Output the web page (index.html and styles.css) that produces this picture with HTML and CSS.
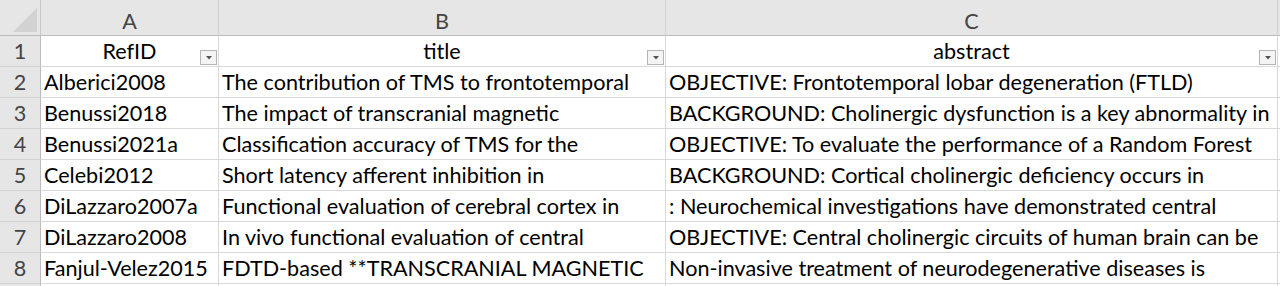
FILE: index.html
```html
<!DOCTYPE html>
<html>
<head>
<meta charset="utf-8">
<link rel="stylesheet" href="styles.css">
</head>
<body>
<div class="sheet">
  <div class="corner"><span class="tri"></span></div>
  <div class="colhead">A</div>
  <div class="colhead">B</div>
  <div class="colhead">C</div>
  <div class="colhead rest"></div>

  <div class="rowhead">1</div>
  <div class="cell hdr">RefID<span class="filter"><svg width="6" height="4" viewBox="0 0 6 4"><path d="M0 0h6L3 3.5z" fill="#555"/></svg></span></div>
  <div class="cell hdr">title<span class="filter"><svg width="6" height="4" viewBox="0 0 6 4"><path d="M0 0h6L3 3.5z" fill="#555"/></svg></span></div>
  <div class="cell hdr">abstract<span class="filter"><svg width="6" height="4" viewBox="0 0 6 4"><path d="M0 0h6L3 3.5z" fill="#555"/></svg></span></div>
  <div class="cell rest"></div>

  <div class="rowhead">2</div>
  <div class="cell">Alberici2008</div>
  <div class="cell">The contribution of TMS to frontotemporal</div>
  <div class="cell">OBJECTIVE: Frontotemporal lobar degeneration (FTLD)</div>
  <div class="cell rest"></div>

  <div class="rowhead">3</div>
  <div class="cell">Benussi2018</div>
  <div class="cell">The impact of transcranial magnetic</div>
  <div class="cell">BACKGROUND: Cholinergic dysfunction is a key abnormality in</div>
  <div class="cell rest"></div>

  <div class="rowhead">4</div>
  <div class="cell">Benussi2021a</div>
  <div class="cell">Classification accuracy of TMS for the</div>
  <div class="cell">OBJECTIVE: To evaluate the performance of a Random Forest</div>
  <div class="cell rest"></div>

  <div class="rowhead">5</div>
  <div class="cell">Celebi2012</div>
  <div class="cell">Short latency afferent inhibition in</div>
  <div class="cell">BACKGROUND: Cortical cholinergic deficiency occurs in</div>
  <div class="cell rest"></div>

  <div class="rowhead">6</div>
  <div class="cell">DiLazzaro2007a</div>
  <div class="cell">Functional evaluation of cerebral cortex in</div>
  <div class="cell">: Neurochemical investigations have demonstrated central</div>
  <div class="cell rest"></div>

  <div class="rowhead">7</div>
  <div class="cell">DiLazzaro2008</div>
  <div class="cell">In vivo functional evaluation of central</div>
  <div class="cell">OBJECTIVE: Central cholinergic circuits of human brain can be</div>
  <div class="cell rest"></div>

  <div class="rowhead">8</div>
  <div class="cell">Fanjul-Velez2015</div>
  <div class="cell">FDTD-based **TRANSCRANIAL MAGNETIC</div>
  <div class="cell">Non-invasive treatment of neurodegenerative diseases is</div>
  <div class="cell rest"></div>

  <div class="rowhead"></div>
  <div class="cell"></div>
  <div class="cell"></div>
  <div class="cell"></div>
  <div class="cell rest"></div>
</div>
</body>
</html>
```
FILE: styles.css
```css
html, body {
  margin: 0;
  padding: 0;
  background: #ffffff;
}
.sheet {
  display: grid;
  grid-template-columns: 41px 178px 447px 612px 2px;
  grid-template-rows: 36px repeat(9, 31px);
  font-family: Lato, "Open Sans", sans-serif;
  font-size: 21.6px;
  color: #000;
  overflow: hidden;
  height: 286px;
}
.corner {
  background: #e6e6e6;
  border-right: 1px solid #c8c8c8;
  border-bottom: 1px solid #bcbcbc;
  position: relative;
}
.tri {
  position: absolute;
  right: 3px;
  bottom: 3px;
  width: 0;
  height: 0;
  border-left: 24px solid transparent;
  border-bottom: 24px solid #d2d2d2;
}
.colhead {
  background: #e6e6e6;
  border-right: 1px solid #d2d2d2;
  border-bottom: 1px solid #bcbcbc;
  display: flex;
  align-items: center;
  justify-content: center;
  color: #444;
  padding-top: 6px;
  box-sizing: border-box;
}
.rowhead {
  background: #e6e6e6;
  border-right: 1px solid #bcbcbc;
  border-bottom: 1px solid #d2d2d2;
  display: flex;
  align-items: center;
  justify-content: center;
  color: #444;
}
.cell {
  border-right: 1px solid #d9d9d9;
  border-bottom: 1px solid #d9d9d9;
  display: flex;
  align-items: center;
  padding-left: 3px;
  white-space: nowrap;
  overflow: hidden;
  position: relative;
}
.cell.rest, .colhead.rest {
  border-right: none;
  padding: 0;
}
.hdr {
  justify-content: center;
  padding-left: 0;
}
.filter {
  position: absolute;
  right: 1px;
  bottom: 1px;
  width: 15px;
  height: 13px;
  border: 1px solid #b4b4b4;
  background: #f4f4f4;
  display: flex;
  align-items: center;
  justify-content: center;
}
```
